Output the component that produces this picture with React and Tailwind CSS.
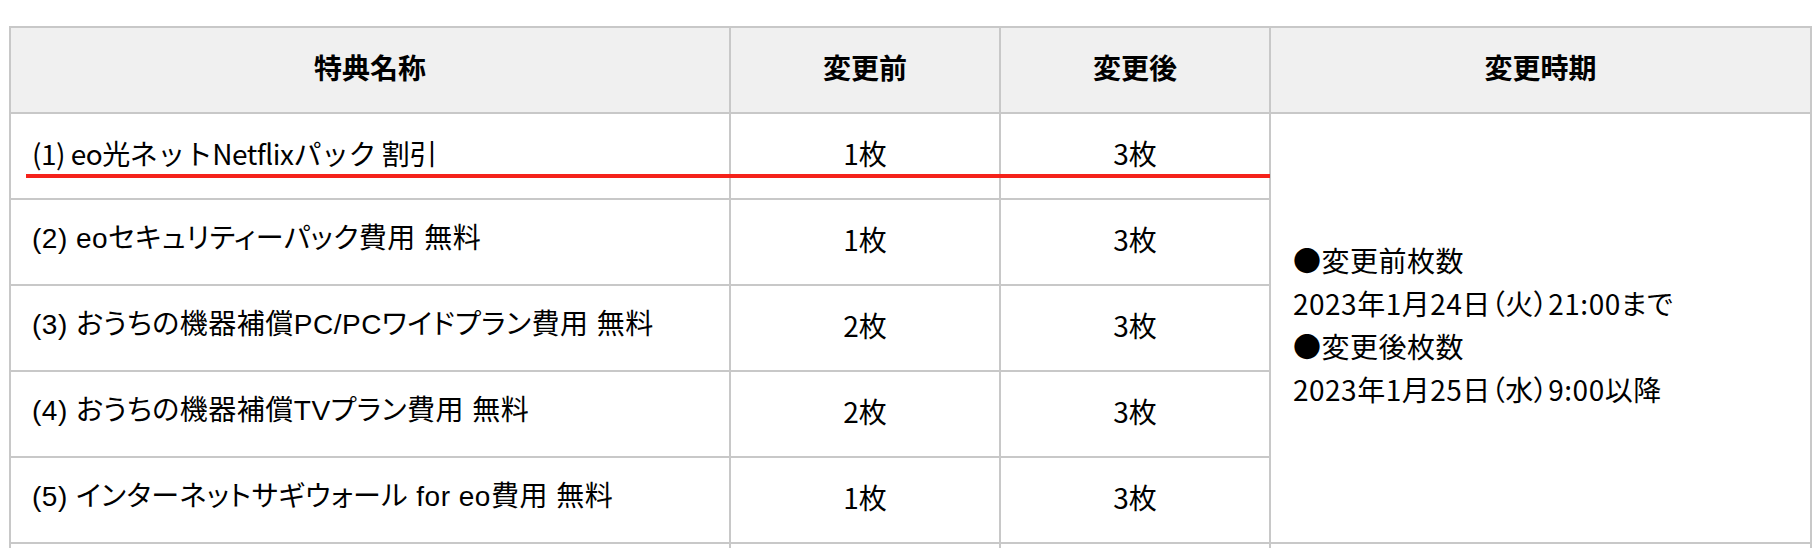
import React from 'react';

const rows = [
  { name: '(1) eo光ネットNetflixパック 割引', before: '1枚', after: '3枚', first: true },
  { name: '(2) eoセキュリティーパック費用 無料', before: '1枚', after: '3枚' },
  { name: '(3) おうちの機器補償PC/PCワイドプラン費用 無料', before: '2枚', after: '3枚' },
  { name: '(4) おうちの機器補償TVプラン費用 無料', before: '2枚', after: '3枚' },
  { name: '(5) インターネットサギウォール for eo費用 無料', before: '1枚', after: '3枚' },
];

const App = () => {
  return (
    <div className="min-h-screen bg-white pt-[26px] pl-[9px] text-black font-['Noto_Sans_CJK_JP',sans-serif]">
      <div className="relative w-fit">
        <div className="grid grid-cols-[718px_268px_268px_539px] grid-rows-[84px_84px_84px_84px_84px_84px_84px] gap-[2px] p-[2px] bg-[#c8c8c8] text-[28px]">
          {/* Header */}
          <div className="bg-[#f0f0f0] flex items-center justify-center pb-[6px] font-bold">特典名称</div>
          <div className="bg-[#f0f0f0] flex items-center justify-center pb-[6px] font-bold">変更前</div>
          <div className="bg-[#f0f0f0] flex items-center justify-center pb-[6px] font-bold">変更後</div>
          <div className="bg-[#f0f0f0] flex items-center justify-center pb-[6px] font-bold">変更時期</div>

          {rows.map((r, i) => (
            <React.Fragment key={i}>
              <div
                className={
                  r.first
                    ? 'bg-white flex items-center pl-[21px] pb-[6px] tracking-[-0.5px]'
                    : "bg-white flex items-center pl-[21px] pb-[6px] tracking-[0.5px] font-['Liberation_Sans','Noto_Sans_CJK_JP',sans-serif] [font-feature-settings:'palt']"
                }
              >
                {r.name}
              </div>
              <div className="bg-white flex items-center justify-center pb-[6px]">{r.before}</div>
              <div className="bg-white flex items-center justify-center pb-[6px]">{r.after}</div>
              {i === 0 && (
                <div className="bg-white row-span-5 flex flex-col justify-center pl-[22px] pb-[6px] leading-[43px] tracking-[0.5px] [font-feature-settings:'palt']">
                  <p>●変更前枚数</p>
                  <p>2023年1月24日（火）21:00まで</p>
                  <p>●変更後枚数</p>
                  <p>2023年1月25日（水）9:00以降</p>
                </div>
              )}
            </React.Fragment>
          ))}

          {/* next row (cut off) */}
          <div className="bg-white"></div>
          <div className="bg-white"></div>
          <div className="bg-white"></div>
          <div className="bg-white"></div>
        </div>

        {/* red underline annotation */}
        <div className="absolute left-[17px] top-[148px] w-[1244px] h-[4px] bg-[#f5221b]"></div>
      </div>
    </div>
  );
};

export default App;
